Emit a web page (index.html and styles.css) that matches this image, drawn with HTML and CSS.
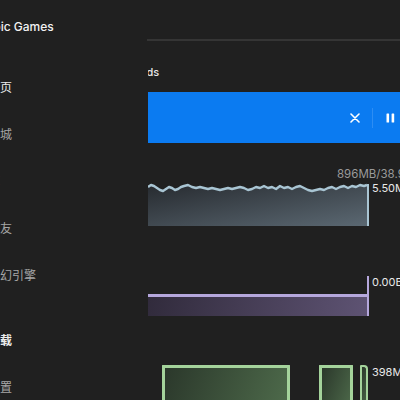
FILE: index.html
```html
<!DOCTYPE html>
<html lang="zh">
<head>
<meta charset="utf-8">
<link rel="stylesheet" href="styles.css">
</head>
<body>
<div class="app">
  <aside class="sidebar">
    <div class="brand">Epic Games</div>
    <nav class="nav">
      <div class="nav-item active">首页</div>
      <div class="nav-item">商城</div>
      <div class="nav-item">库</div>
      <div class="nav-item">好友</div>
      <div class="nav-item">虚幻引擎</div>
    </nav>
    <nav class="nav nav-bottom">
      <div class="nav-item active strong">下载</div>
      <div class="nav-item">设置</div>
    </nav>
  </aside>
  <main class="main">
    <div class="topbar"></div>
    <div class="title"><span class="title-text">Downloads</span></div>
    <div class="banner">
      <svg class="icon-x" width="10" height="10" viewBox="0 0 10 10"><path d="M1 1 L9 9 M9 1 L1 9" stroke="#fff" stroke-width="1.6" stroke-linecap="round"/></svg>
      <span class="divider"></span>
      <svg class="icon-pause" width="9" height="10" viewBox="0 0 9 10"><rect x="0.5" y="0.5" width="2.6" height="9" rx="0.6" fill="#fff"/><rect x="5.6" y="0.5" width="2.6" height="9" rx="0.6" fill="#fff"/></svg>
    </div>

    <section class="chart-block net">
      <div class="chart-head">896MB/38.9GB</div>
      <div class="chart-row">
        <svg class="net-chart" width="221" height="45" viewBox="0 0 221 45">
          <defs>
            <linearGradient id="netfill" x1="0" y1="0" x2="1" y2="1">
              <stop offset="0" stop-color="#272b30"/>
              <stop offset="1" stop-color="#5b6872"/>
            </linearGradient>
          </defs>
          <path fill="url(#netfill)" d="M0 6 L3 4 L6 5 L9 7 L12 9 L15 10 L18 8 L21 6 L24 7 L27 9 L30 8 L33 6 L36 5 L40 4 L44 6 L48 7 L52 6 L56 7 L60 8 L64 7 L68 8 L72 9 L76 8 L80 7 L84 8 L88 7 L92 6 L96 7 L100 9 L104 8 L108 6 L112 7 L116 5 L120 7 L124 6 L128 8 L132 5 L136 7 L140 6 L144 8 L148 6 L152 5 L156 7 L160 9 L164 10 L168 9 L172 8 L176 9 L180 7 L184 6 L188 8 L192 6 L196 5 L200 7 L204 5 L208 6 L212 4 L216 5 L219 4 L219 45 L0 45 Z"/>
          <path fill="none" stroke="#a9c5d3" stroke-width="2.4" stroke-linejoin="round" d="M0 6 L3 4 L6 5 L9 7 L12 9 L15 10 L18 8 L21 6 L24 7 L27 9 L30 8 L33 6 L36 5 L40 4 L44 6 L48 7 L52 6 L56 7 L60 8 L64 7 L68 8 L72 9 L76 8 L80 7 L84 8 L88 7 L92 6 L96 7 L100 9 L104 8 L108 6 L112 7 L116 5 L120 7 L124 6 L128 8 L132 5 L136 7 L140 6 L144 8 L148 6 L152 5 L156 7 L160 9 L164 10 L168 9 L172 8 L176 9 L180 7 L184 6 L188 8 L192 6 L196 5 L200 7 L204 5 L208 6 L212 4 L216 5 L219 4"/>
          <rect x="219" y="3" width="2" height="42" fill="#a9c5d3"/>
        </svg>
        <div class="chart-label">5.50MB/s</div>
      </div>
    </section>

    <section class="chart-block disk">
      <div class="chart-row">
        <div class="disk-chart"><div class="disk-fill"></div></div>
        <div class="chart-label">0.00B/s</div>
      </div>
    </section>

    <section class="chart-block mem">
      <div class="chart-row">
        <div class="mem-chart">
          <div class="mem-bar" style="width:128px"></div>
          <div class="mem-bar gap-lg" style="width:34px"></div>
          <div class="mem-bar thin" style="width:8px"></div>
        </div>
        <div class="chart-label">398MB</div>
      </div>
    </section>
  </main>
</div>
</body>
</html>
```
FILE: styles.css
```css
* { box-sizing: border-box; }
html, body {
  margin: 0;
  padding: 0;
  width: 400px;
  height: 400px;
  overflow: hidden;
  background: #202020;
  font-family: Inter, "Noto Sans CJK SC", "Noto Sans", sans-serif;
  color: #e6e6e6;
}
.app {
  display: flex;
  height: 400px;
}
.sidebar {
  flex: 0 0 164px;
  margin-left: -16px;
  display: flex;
  flex-direction: column;
}
.brand {
  height: 54px;
  line-height: 54px;
  padding-left: 2px;
  font-size: 12px;
  font-weight: 500;
  color: #f2f2f2;
  white-space: nowrap;
}
.nav {
  margin-top: 9px;
  display: flex;
  flex-direction: column;
}
.nav-bottom {
  margin-top: 18px;
}
.nav-item {
  height: 47px;
  line-height: 47px;
  padding-left: 4px;
  font-size: 12px;
  color: #a6a6a6;
  font-family: "Noto Sans CJK SC", sans-serif;
  white-space: nowrap;
}
.nav-item.active { color: #ececec; }
.nav-item.strong { font-weight: 700; }

.main {
  flex: 1;
  min-width: 0;
  display: flex;
  flex-direction: column;
}
.topbar {
  height: 41px;
  flex: 0 0 41px;
  border-bottom: 2px solid #353535;
  margin-left: -1px;
}
.title {
  height: 51px;
  flex: 0 0 51px;
  padding-top: 24px;
  overflow: hidden;
}
.title-text {
  display: block;
  line-height: 14px;
  font-size: 11px;
  font-weight: 500;
  color: #e8e8e8;
  white-space: nowrap;
  text-indent: -47.5px;
}
.banner {
  height: 51px;
  flex: 0 0 51px;
  background: #0b7bf1;
  display: flex;
  align-items: center;
  justify-content: flex-end;
  padding-right: 5px;
}
.icon-x { display: block; margin-right: 12px; }
.divider {
  width: 1px;
  height: 20px;
  background: rgba(255,255,255,0.14);
  margin-right: 13px;
}
.icon-pause { display: block; }

.chart-block { display: flex; flex-direction: column; }
.chart-row {
  display: flex;
  align-items: flex-start;
  gap: 3px;
}
.chart-label {
  font-size: 11px;
  line-height: 14px;
  color: #e8e8e8;
  white-space: nowrap;
}
.net { margin-top: 24px; }
.chart-head {
  font-size: 11.5px;
  line-height: 14px;
  color: #9a9a9a;
  padding-left: 189px;
  white-space: nowrap;
}
.net-chart { display: block; flex: 0 0 221px; }

.disk { margin-top: 50px; }
.disk-chart {
  flex: 0 0 221px;
  height: 40px;
  border-right: 2px solid #b5a7dc;
  display: flex;
  align-items: flex-end;
}
.disk-fill {
  flex: 1;
  height: 22px;
  border-top: 3px solid #b5a7dc;
  background: linear-gradient(100deg, #312b3c 0%, #5e5373 100%);
}
.disk .chart-label { margin-top: -1px; }

.mem { margin-top: 49px; }
.mem-chart {
  flex: 0 0 221px;
  height: 50px;
  display: flex;
  padding-left: 14px;
}
.mem-bar {
  height: 50px;
  border: 3px solid #a4d39b;
  border-bottom: none;
  border-radius: 1px 1px 0 0;
  background: linear-gradient(110deg, #2b382b 0%, #4e6b4b 100%);
}
.mem-bar.gap-lg { margin-left: 29px; }
.mem-bar.thin {
  margin-left: 7px;
  border-radius: 1px 4px 0 0;
  border-width: 2px;
  border-bottom: none;
}
```
